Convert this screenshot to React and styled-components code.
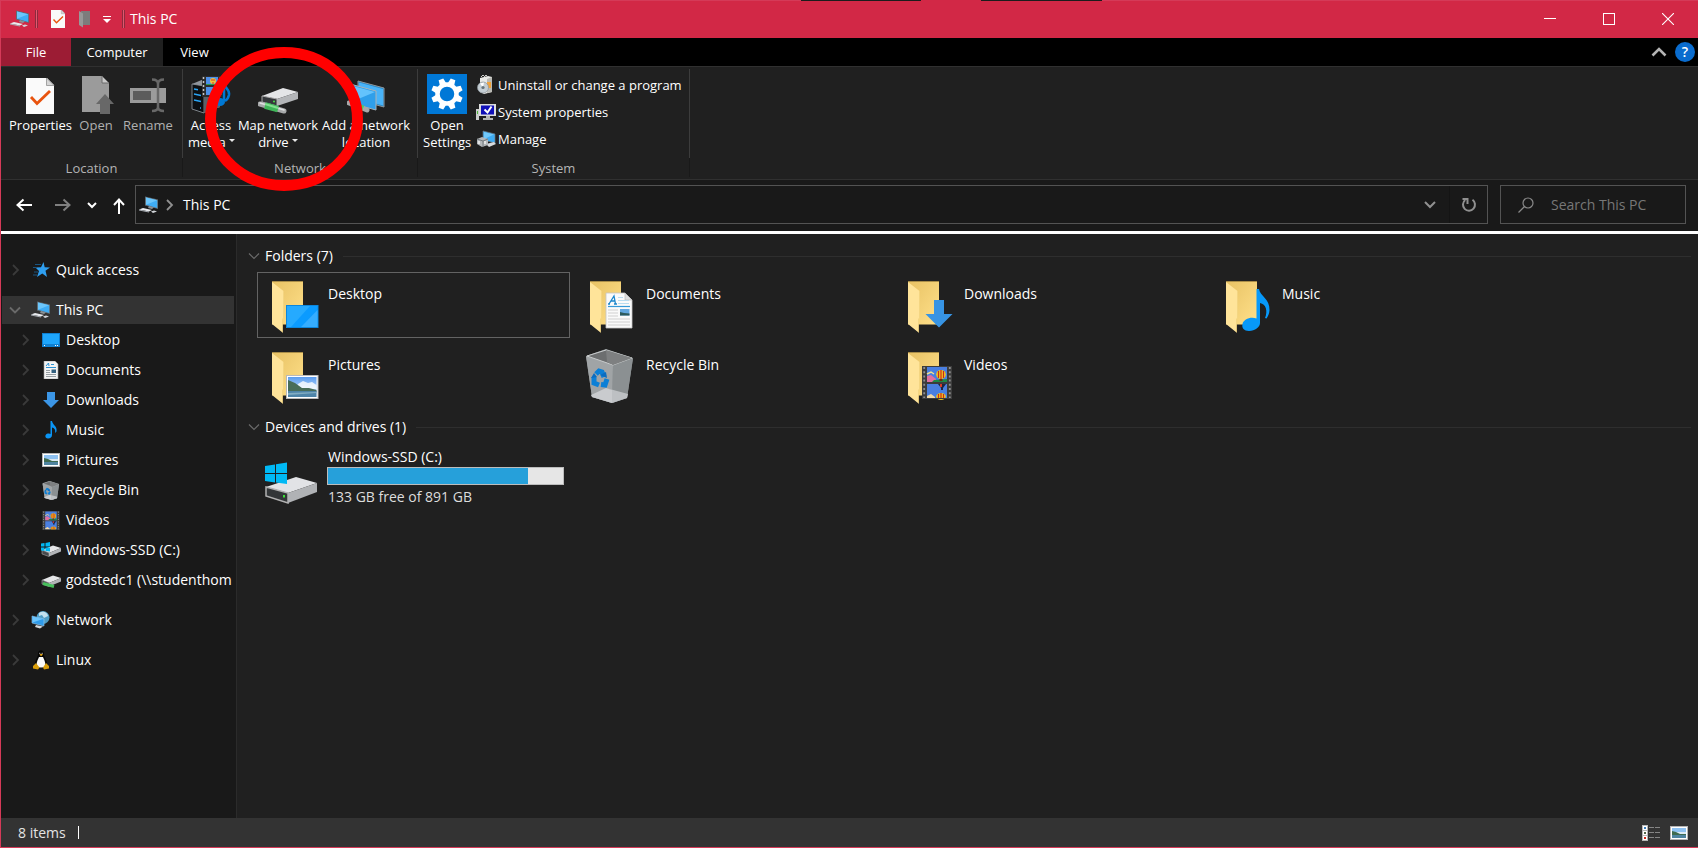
import React, { Component } from 'react';
import styled, { createGlobalStyle } from 'styled-components';

const folders = [
    { name: 'Desktop', icon: 'desktop', selected: true },
    { name: 'Documents', icon: 'documents' },
    { name: 'Downloads', icon: 'downloads' },
    { name: 'Music', icon: 'music' },
    { name: 'Pictures', icon: 'pictures' },
    { name: 'Recycle Bin', icon: 'bin' },
    { name: 'Videos', icon: 'videos' },
];

const tree = [
    { name: 'Desktop', icon: <DesktopIcon /> },
    { name: 'Documents', icon: <DocumentIcon /> },
    { name: 'Downloads', icon: <DownArrowIcon /> },
    { name: 'Music', icon: <NoteIcon /> },
    { name: 'Pictures', icon: <PictureIcon /> },
    { name: 'Recycle Bin', icon: <SmallBinIcon /> },
    { name: 'Videos', icon: <FilmIcon /> },
    { name: 'Windows-SSD (C:)', icon: <SmallDriveIcon windows /> },
    { name: 'godstedc1 (\\\\studenthom', icon: <SmallDriveIcon /> },
];

export default class App extends Component {
    render() {
        return (
            <Window>
                <GlobalStyle />
                <TitleBar />
                <Tabs />
                <Ribbon />
                <AddressRow />
                <Body>
                    <Sidebar />
                    <FileList />
                </Body>
                <StatusBar />
                <Highlight width="158" height="144" viewBox="0 0 158 144" aria-hidden="true">
                    <ellipse cx="79" cy="72" rx="73.5" ry="66.5" fill="none" stroke="#ff0000" strokeWidth="11" />
                </Highlight>
            </Window>
        )
    }
}

function TitleBar() {
    return (
        <TitleContainer>
            <QuickTools>
                <PcIcon />
                <TitleDivider />
                <ToolButton aria-label="Properties"><CheckDocIcon size={18} /></ToolButton>
                <ToolButton aria-label="New folder">
                    <svg width="14" height="18" viewBox="0 0 14 18">
                        <path d="M3 1H12V15H3Z" fill="#7c7c7c" />
                        <path d="M1 1L5 3.500V17.500L1 15Z" fill="#989898" />
                    </svg>
                </ToolButton>
                <ToolButton aria-label="Customize Quick Access Toolbar">
                    <svg width="8" height="8" viewBox="0 0 8 8">
                        <path d="M0 1.500H8" stroke="#fff" />
                        <path d="M0 4H8L4 8Z" fill="#fff" />
                    </svg>
                </ToolButton>
                <TitleDivider />
            </QuickTools>
            <Title>This PC</Title>
            <WindowButton aria-label="Minimize">
                <svg width="12" height="12" viewBox="0 0 12 12"><path d="M0 5.500H12" stroke="#fff" /></svg>
            </WindowButton>
            <WindowButton aria-label="Maximize">
                <svg width="12" height="12" viewBox="0 0 12 12"><rect x=".5" y=".5" width="11" height="11" fill="none" stroke="#fff" /></svg>
            </WindowButton>
            <WindowButton aria-label="Close">
                <svg width="12" height="12" viewBox="0 0 12 12"><path d="M0 0L12 12M12 0L0 12" stroke="#fff" strokeWidth="1.100" /></svg>
            </WindowButton>
        </TitleContainer>
    )
}

function Tabs() {
    return (
        <TabRow>
            <Tab kind="file">File</Tab>
            <Tab kind="active">Computer</Tab>
            <Tab kind="plain">View</Tab>
            <TabTools>
                <ToolButton aria-label="Minimize the Ribbon">
                    <svg width="16" height="10" viewBox="0 0 16 10"><path d="M1.500 8.500L8 2L14.500 8.500" fill="none" stroke="#b4b4b4" strokeWidth="2.600" /></svg>
                </ToolButton>
                <HelpButton aria-label="Help">?</HelpButton>
            </TabTools>
        </TabRow>
    )
}

function Ribbon() {
    return (
        <RibbonContainer>
            <RibbonGroup width={182}>
                <GroupTools inset={8}>
                    <BigButton width={62}>
                        <BigIcon><CheckDocIcon size={36} /></BigIcon>
                        Properties
                    </BigButton>
                    <BigButton width={50} disabled>
                        <BigIcon>
                            <svg width="36" height="38" viewBox="0 0 36 38">
                                <path d="M4 0H24L31 7V36H4Z" fill="#9b9b9b" />
                                <path d="M24 0V7H31Z" fill="#c9c9c9" stroke="#6c6c6c" />
                                <path d="M27 18L36 28H32V38H22V28H18Z" fill="#686868" />
                            </svg>
                        </BigIcon>
                        Open
                    </BigButton>
                    <BigButton width={54} disabled>
                        <BigIcon>
                            <svg width="38" height="36" viewBox="0 0 38 36">
                                <rect x="1" y="10" width="36" height="15" fill="#9b9b9b" />
                                <rect x="4" y="13" width="18" height="9" fill="#5c5c5c" />
                                <path d="M29 3V31M23 1.500C27 1.500 29 3 29 6C29 3 31 1.500 35 1.500M23 33C27 33 29 32 29 29C29 32 31 33 35 33" fill="none" stroke="#686868" strokeWidth="2.500" />
                            </svg>
                        </BigIcon>
                        Rename
                    </BigButton>
                </GroupTools>
                <GroupName>Location</GroupName>
            </RibbonGroup>
            <RibbonGroup width={235}>
                <GroupTools inset={5}>
                    <BigButton width={46}>
                        <BigIcon><MediaIcon /></BigIcon>
                        Access<br />media <DropMark />
                    </BigButton>
                    <BigButton width={88}>
                        <BigIcon><NetworkDriveIcon /></BigIcon>
                        Map network<br />drive <DropMark />
                    </BigButton>
                    <BigButton width={88}>
                        <BigIcon><NetworkPlaceIcon /></BigIcon>
                        Add a network<br />location
                    </BigButton>
                </GroupTools>
                <GroupName>Network</GroupName>
            </RibbonGroup>
            <RibbonGroup width={272}>
                <GroupTools inset={5}>
                    <BigButton width={48}>
                        <BigIcon><SettingsIcon /></BigIcon>
                        Open<br />Settings
                    </BigButton>
                    <SmallTools>
                        <SmallButton><UninstallIcon />Uninstall or change a program</SmallButton>
                        <SmallButton><SystemIcon />System properties</SmallButton>
                        <SmallButton><ManageIcon />Manage</SmallButton>
                    </SmallTools>
                </GroupTools>
                <GroupName>System</GroupName>
            </RibbonGroup>
        </RibbonContainer>
    )
}

function AddressRow() {
    return (
        <AddressContainer>
            <NavButtons>
                <ToolButton aria-label="Back">
                    <svg width="16" height="14" viewBox="0 0 16 14"><path d="M7.500 1.500L1.500 7L7.500 12.500M1.500 7H16" fill="none" stroke="#fff" strokeWidth="2" /></svg>
                </ToolButton>
                <ToolButton aria-label="Forward">
                    <svg width="16" height="14" viewBox="0 0 16 14"><path d="M8.500 1.500L14.500 7L8.500 12.500M14.500 7H0" fill="none" stroke="#808080" strokeWidth="2" /></svg>
                </ToolButton>
                <ToolButton aria-label="Recent locations">
                    <svg width="10" height="8" viewBox="0 0 10 8"><path d="M1 2L5 6L9 2" fill="none" stroke="#fff" strokeWidth="2" /></svg>
                </ToolButton>
                <ToolButton aria-label="Up">
                    <svg width="12" height="18" viewBox="0 0 12 18"><path d="M1 9L6 3.500L11 9M6 4V18" fill="none" stroke="#fff" strokeWidth="2" /></svg>
                </ToolButton>
            </NavButtons>
            <AddressBox>
                <PcIcon />
                <Chevron color="#909090" />
                <Path>This PC</Path>
                <AddressButton aria-label="Previous locations">
                    <svg width="12" height="8" viewBox="0 0 12 8"><path d="M1 1L6 6L11 1" fill="none" stroke="#909090" strokeWidth="2" /></svg>
                </AddressButton>
                <AddressButton aria-label="Refresh" divided>
                    <svg width="16" height="16" viewBox="0 0 16 16">
                        <path d="M11.500 2.800A6 6 0 1 1 4.200 3" fill="none" stroke="#909090" strokeWidth="2" />
                        <path d="M1.500 2H6.500V7" fill="none" stroke="#909090" strokeWidth="2" />
                    </svg>
                </AddressButton>
            </AddressBox>
            <SearchBox>
                <svg width="16" height="16" viewBox="0 0 16 16">
                    <circle cx="10" cy="6" r="5" fill="none" stroke="#8a8a8a" strokeWidth="1.200" />
                    <path d="M6.500 9.500L.5 15.500" stroke="#8a8a8a" strokeWidth="1.200" />
                </svg>
                <SearchInput aria-label="Search This PC" placeholder="Search This PC" />
            </SearchBox>
        </AddressContainer>
    )
}

function Sidebar() {
    return (
        <SidebarContainer>
            <TreeRow><Chevron color="#3a3a3a" /><TreeIcon><StarIcon /></TreeIcon>Quick access</TreeRow>
            <TreeGroup>
                <TreeRow current><Chevron color="#6a6a6a" down /><TreeIcon><PcIcon /></TreeIcon>This PC</TreeRow>
                {tree.map((item, i) =>
                    <TreeRow nested key={i}>
                        <Chevron color="#3a3a3a" />
                        <TreeIcon>{item.icon}</TreeIcon>
                        {item.name}
                    </TreeRow>
                )}
            </TreeGroup>
            <TreeRow><Chevron color="#3a3a3a" /><TreeIcon><NetworkIcon /></TreeIcon>Network</TreeRow>
            <TreeRow><Chevron color="#3a3a3a" /><TreeIcon><LinuxIcon /></TreeIcon>Linux</TreeRow>
        </SidebarContainer>
    )
}

function FileList() {
    return (
        <Main>
            <SectionHeader>
                <SectionChevron />
                <SectionTitle>Folders (7)</SectionTitle>
            </SectionHeader>
            <Tiles>
                {folders.map((folder, i) =>
                    <Tile selected={folder.selected} key={i}>
                        <TileIcon>{folder.icon === 'bin' ? <BinIcon /> : <FolderIcon kind={folder.icon} />}</TileIcon>
                        <TileName>{folder.name}</TileName>
                    </Tile>
                )}
            </Tiles>
            <SectionHeader>
                <SectionChevron />
                <SectionTitle>Devices and drives (1)</SectionTitle>
            </SectionHeader>
            <Tiles>
                <Tile>
                    <TileIcon><DriveIcon /></TileIcon>
                    <DriveInfo>
                        <span>Windows-SSD (C:)</span>
                        <Usage><UsageFill style={{ width: `${(891 - 133) / 891 * 100}%` }} /></Usage>
                        <Free>133 GB free of 891 GB</Free>
                    </DriveInfo>
                </Tile>
            </Tiles>
        </Main>
    )
}

function StatusBar() {
    return (
        <StatusContainer>
            <Count>8 items</Count>
            <ViewButtons>
                <ToolButton aria-label="Details view">
                    <svg width="18" height="16" viewBox="0 0 18 16">
                        <path d="M0 0H6V16H0Z" fill="#b8b8b8" />
                        <path d="M1 1H5V5H1ZM1 6H5V10H1ZM1 11H5V15H1Z" fill="#fff" />
                        <path d="M2 2H4V4H2Z" fill="#3a7fc0" />
                        <path d="M2 7H4V9H2Z" fill="#55664a" />
                        <path d="M2 12H4V14H2Z" fill="#d02a1a" />
                        <path d="M7 2.500H12M13 2.500H18M7 7.500H12M13 7.500H18M7 12.500H12M13 12.500H18" stroke="#858585" />
                    </svg>
                </ToolButton>
                <ToolButton aria-label="Large icons view"><PictureIcon /></ToolButton>
            </ViewButtons>
        </StatusContainer>
    )
}

function Chevron({ color, down }) {
    return (
        <svg width="12" height="12" viewBox="0 0 12 12">
            <path d={down ? 'M1 3.500L6 8.500L11 3.500' : 'M4 1L9 6L4 11'} fill="none" stroke={color} strokeWidth="1.800" />
        </svg>
    )
}

function SectionChevron() {
    return (
        <svg width="12" height="12" viewBox="0 0 12 12">
            <path d="M1 3.500L6 8.500L11 3.500" fill="none" stroke="#6a6a6a" strokeWidth="1.200" />
        </svg>
    )
}

function DropMark() {
    return <svg width="6" height="8" viewBox="0 0 6 8"><path d="M0 0H6L3 3Z" fill="#e8e8e8" /></svg>
}

function PcIcon() {
    return (
        <svg width="20" height="18" viewBox="0 0 20 18">
            <path d="M6 .5L19 3.500V13L6 9.500Z" fill="#5f6b73" />
            <path d="M7 1.500L18.200 4.200V12L7 8.800Z" fill="#3fadf5" />
            <path d="M7 1.500L18.200 4.200L7 8.800Z" fill="#6cc6fb" />
            <path d="M10 10L15 11.500L13 13L9 12Z" fill="#8b9196" />
            <path d="M0 13.500L4 12L13 14L10 15.500Z" fill="#e8eaed" />
            <path d="M0 13.500L10 15.500V16.500L0 14.500Z" fill="#a8adb3" />
            <path d="M12 15.500L15 14.500L18 15.500L14 17Z" fill="#d3d6da" />
        </svg>
    )
}

function CheckDocIcon({ size }) {
    return (
        <svg width={size} height={size} viewBox="0 0 36 36">
            <path d="M4 0H25L32 7V36H4Z" fill="#fafafa" />
            <path d="M24.500 0L32 7.500H24.500Z" fill="#d6d6d6" stroke="#8f8f8f" strokeWidth=".8" />
            <path d="M9 19L15 25.500L28 13" fill="none" stroke="#e8530e" strokeWidth="2.800" />
        </svg>
    )
}

function MediaIcon() {
    return (
        <svg width="40" height="38" viewBox="0 0 40 38">
            <path d="M1 8L13 3L29 6V31L13 37L1 33Z" fill="#8f959c" />
            <path d="M1 8L13 10V37L1 33Z" fill="#0c0f12" stroke="#8f959c" strokeWidth=".8" />
            <path d="M3 13L7 13.800M3 18L10 19.500M3 24L10 25.500M9 32H10" stroke="#2aa4f4" strokeWidth="1.400" />
            <path d="M13 10L29 6V31L13 37Z" fill="#5b6168" />
            <rect x="11" y="0" width="20" height="21" fill="#2c2c2c" />
            <path d="M12.500 1V20M29.500 1V20" stroke="#c4c4c4" strokeWidth="1.500" strokeDasharray="2 2" />
            <path d="M15 1H27V9H15ZM15 11H27V19H15Z" fill="#4d8fe8" />
            <circle cx="22" cy="5" r="3" fill="#f0c23c" />
            <path d="M20 4H24M22 6V9" stroke="#d3362a" />
            <path d="M15 8H27V9H15Z" fill="#2e9c4b" />
            <path d="M33 7V25M33 8C35 13 39 14 38 19C37 23 36 24 34 25" fill="none" stroke="#0078d4" strokeWidth="2.500" />
            <ellipse cx="29" cy="26" rx="5" ry="4" fill="#0078d4" />
        </svg>
    )
}

function NetworkDriveIcon() {
    return (
        <svg width="40" height="26" viewBox="0 0 40 26">
            <path d="M4 8L25 0L40 4L19 11Z" fill="#e4e5e7" />
            <path d="M4 8L19 11V18L4 14Z" fill="#35383b" stroke="#a8a8a8" />
            <path d="M19 11L40 4V11L19 18Z" fill="#b3b5b8" />
            <circle cx="16" cy="13.500" r="1" fill="#4ae048" />
            <path d="M2 16L26 23" stroke="#a7a9aa" strokeWidth="5" strokeLinecap="round" />
            <path d="M2 15L26 22" stroke="#dedfe0" strokeWidth="1.500" strokeLinecap="round" />
            <path d="M7 17.500L20 21.200" stroke="#3fb558" strokeWidth="6.500" />
            <path d="M7 16L20 20" stroke="#82e08f" strokeWidth="2" />
        </svg>
    )
}

function NetworkPlaceIcon() {
    return (
        <svg width="38" height="34" viewBox="0 0 38 34">
            <path d="M11 1L37 8V27L11 20Z" fill="#2485c4" stroke="#8d979d" />
            <path d="M12 2.500L36 9V25.500L12 19Z" fill="#49b3f8" />
            <path d="M3 4L29 11V30L3 23Z" fill="#2f9fea" stroke="#aab3b8" />
            <path d="M4 5.500L28 12L4 22Z" fill="#64c3fc" />
            <path d="M2 23L20 30" stroke="#a7a9aa" strokeWidth="5" strokeLinecap="round" />
            <path d="M6 24.500L16 28.500" stroke="#4fca61" strokeWidth="6" />
        </svg>
    )
}

function SettingsIcon() {
    return (
        <svg width="40" height="40" viewBox="0 0 40 40">
            <rect width="40" height="40" fill="#0078d7" />
            <g transform="translate(20 20)" fill="#fff">
                {[22.5, 67.5, 112.5, 157.5, 202.5, 247.5, 292.5, 337.5].map(a =>
                    <path key={a} d="M-3.600 -9L-2.500 -15.800H2.500L3.600 -9Z" transform={`rotate(${a})`} />
                )}
                <circle r="9.500" fill="none" stroke="#fff" strokeWidth="4.500" />
            </g>
        </svg>
    )
}

function UninstallIcon() {
    return (
        <svg width="20" height="20" viewBox="0 0 20 20">
            <path d="M4 3L12 1L16 2V17L8 19L4 17Z" fill="#e9e9e6" />
            <path d="M11 4L16 2V17L11 18Z" fill="#b9bab5" />
            <path d="M5 2L7 0L9 2M8 2L10 0L12 2" fill="none" stroke="#c9cac6" />
            <rect x="11" y="7" width="4" height="6" fill="#f0a23c" />
            <circle cx="7" cy="12.500" r="5.500" fill="#c4ced4" stroke="#899298" strokeWidth=".7" />
            <path d="M7 12.500L4 8.500L8 7.500Z" fill="#fff" />
            <circle cx="7" cy="12.500" r="1.600" fill="#65737b" />
        </svg>
    )
}

function SystemIcon() {
    return (
        <svg width="20" height="18" viewBox="0 0 20 18">
            <path d="M0 6H3V17H0Z" fill="#c9ccca" />
            <path d="M1 8H2V11H1Z" fill="#4db83b" />
            <path d="M3 1H20V13H3Z" fill="#dcdedc" />
            <path d="M5 2.500H18V11.500H5Z" fill="#1010b8" />
            <path d="M8.500 6.500L11.500 9.500L15.500 3.500" fill="none" stroke="#fff" strokeWidth="2" />
            <path d="M10 13H14V15H17V17H7V15H10Z" fill="#b4b6b4" />
        </svg>
    )
}

function ManageIcon() {
    return (
        <svg width="20" height="18" viewBox="0 0 20 18">
            <path d="M7 1L19 4V13L7 10Z" fill="#3fadf5" stroke="#6b777e" strokeWidth=".7" />
            <path d="M8 2L18 4.500L8 9Z" fill="#71c9fb" />
            <path d="M10 14L18 12L20 14L13 17Z" fill="#d7dade" />
            <path d="M1 9L6 7L12 9V15L6 17L1 14Z" fill="#b4b8bb" />
            <path d="M1 9L7 11L12 9M7 11V17" fill="none" stroke="#747a7e" />
            <path d="M3 11V14M9 11V14" stroke="#f1f1f1" strokeWidth="1.500" />
        </svg>
    )
}

function StarIcon() {
    return (
        <svg width="20" height="18" viewBox="0 0 20 18">
            <path d="M12.500 1L13.700 6.200L19 6.500L14.500 9.800L16 16L11.300 12.500L6 16L8 10L4.500 6.500L10 6.300Z" fill="#2f9ff0" />
            <path d="M4 3.500H10M2 6.500H6M3 11H7M2 14H6" stroke="#1a5480" />
        </svg>
    )
}

function DesktopIcon() {
    return (
        <svg width="18" height="14" viewBox="0 0 18 14">
            <rect width="18" height="14" fill="#0f7fd0" />
            <rect x="1" y="1" width="16" height="10" fill="#1ea5fb" />
            <path d="M2 12.500H3M13 12.500H14M15 12.500H16" stroke="#fff" />
        </svg>
    )
}

function DocumentIcon() {
    return (
        <svg width="18" height="18" viewBox="0 0 18 18">
            <path d="M2 0H13L16 3V18H2Z" fill="#f4f4f4" stroke="#9a9a9a" strokeWidth=".6" />
            <path d="M4 5L6.500 2L7 5M4 6.500H14M9 3.500H12" fill="none" stroke="#2c92d4" />
            <path d="M4 9.500H8M4 11.500H8M4 13.500H14M4 15.500H14" stroke="#8c9499" strokeWidth=".9" />
            <rect x="9.500" y="8.500" width="4.500" height="3.500" fill="#33607f" />
        </svg>
    )
}

function DownArrowIcon() {
    return <svg width="18" height="18" viewBox="0 0 18 18"><path d="M5 1H13V9H17L9 17L1 9H5Z" fill="#3b96e6" /></svg>
}

function NoteIcon() {
    return (
        <svg width="18" height="18" viewBox="0 0 18 18">
            <path d="M8.500 0H10C10.500 4 15.500 5 14.500 10.500L13 12C14 8.500 12 7 10 6.500V14C10 16 8.500 17.500 6 17.500C2.500 17.500 2.500 13 6 12.500C7 12.300 8 12.500 8.500 13Z" fill="#0a95f5" />
        </svg>
    )
}

function PictureIcon() {
    return (
        <svg width="18" height="14" viewBox="0 0 18 14">
            <rect width="18" height="14" fill="#b5b5b5" />
            <rect x="1" y="1" width="16" height="12" fill="#fff" />
            <rect x="2" y="2" width="14" height="10" fill="#8fc2f2" />
            <path d="M2 6H16V8H2Z" fill="#dbeaf4" />
            <path d="M2 5L6 6L10 8H16V9.500H2Z" fill="#3f6b50" />
            <path d="M2 9H16V12H2Z" fill="#4f84a0" />
        </svg>
    )
}

function SmallBinIcon() {
    return (
        <svg width="18" height="19" viewBox="0 0 48 54">
            <BinShape />
        </svg>
    )
}

function FilmIcon() {
    return <svg width="18" height="19" viewBox="0 0 30 33"><FilmShape /></svg>
}

function SmallDriveIcon({ windows }) {
    return (
        <svg width="20" height="16" viewBox="0 0 20 16">
            <path d="M1 8L12 3.500L20 6L8 11Z" fill="#e6e7e9" />
            <path d="M1 8L8 11V14.500L1 12Z" fill="#47494c" stroke="#a4a4a4" strokeWidth=".6" />
            <path d="M8 11L20 6V9.500L8 14.500Z" fill="#b2b4b7" />
            {windows
                ? <path d="M0 1.500L3.500 1V4.500H0ZM4.500 1L9 0V4.500H4.500ZM0 5.500H3.500V9L0 8.500ZM4.500 5.500H9V9.500L4.500 9Z" fill="#00b8f4" />
                : <path d="M2 11.500L13 14.500" stroke="#48c05c" strokeWidth="3" />}
        </svg>
    )
}

function NetworkIcon() {
    return (
        <svg width="20" height="18" viewBox="0 0 20 18">
            <circle cx="12" cy="6.500" r="6.500" fill="#4f9dc4" />
            <path d="M8 2C12 -1 17 2 17 5L13 7L11 4L8 5Z" fill="#c3e1ef" />
            <path d="M1 5L13 8V15L1 12Z" fill="#2f9bea" stroke="#9dccec" strokeWidth=".6" />
            <path d="M1.500 5.500L12 8L1.500 11.500Z" fill="#6cc4fb" />
            <path d="M5 14L12 15.500L9 17.500L4 16Z" fill="#d3d7da" />
        </svg>
    )
}

function LinuxIcon() {
    return (
        <svg width="18" height="20" viewBox="0 0 18 20">
            <path d="M6 4C6 -1 12 -1 12 4C12 8 16 11 15 16L13 18H5L3 16C2 11 6 8 6 4Z" fill="#050505" />
            <path d="M7 7H11C12 10 14 12 13 16C12 18 6 18 5 16C4 12 6 10 7 7Z" fill="#fafafa" />
            <path d="M7.500 4.500L9 3.800L11 4.500L9 6.200Z" fill="#e6a817" />
            <path d="M1 16L4 13L7.500 17.500L6 19.500L1 18.500ZM17 16L14 13L11 17.500L12 19.500L17 18.500Z" fill="#d99e0b" />
            <path d="M7.300 3.300H8.300M9.700 3.300H10.700" stroke="#ddd" />
        </svg>
    )
}

function BinShape() {
    return (
        <g>
            <path d="M0 7L20 0L47 9L41 49L26 54L6 48Z" fill="#8f9496" />
            <path d="M0 7L27 16L26 54L6 48Z" fill="#a0a4a6" />
            <path d="M27 16L47 9L41 49L26 54Z" fill="#8b9092" />
            <path d="M1 7L20 1L46 9L27 16Z" fill="#6c6e6f" stroke="#c9cccd" />
            <path d="M20 1L21 13L27 16L46 9Z" fill="#7e8081" />
            <path d="M5 46L20 39L26 41V54L6 48Z" fill="#c9cbce" />
            <path d="M20 39L42 45L41 49L26 54V41Z" fill="#bdc0c3" />
            <g fill="none" stroke="#0b7fd6" strokeWidth="5">
                <path d="M10 25L13 22L16 23L18 28" />
                <path d="M8 28L8 34L13 36" />
                <path d="M15 35.500L19 36L21 30" />
            </g>
            <path d="M14 26L21 29L20 23ZM5 29L11 28L8 24Z" fill="#0b6cc0" />
        </g>
    )
}

function BinIcon() {
    return <svg width="48" height="54" viewBox="0 0 48 54"><BinShape /></svg>
}

function FilmShape() {
    return (
        <g>
            <rect width="30" height="33" fill="#3c3c3c" />
            <path d="M2.200 1V33M27.800 1V33" stroke="#8f8f8f" strokeWidth="1.800" strokeDasharray="2 2.200" />
            <path d="M5 1H25V16H5ZM5 18H25V32H5Z" fill="#4a7fe0" />
            <path d="M5 10L9 9L14 13L14 16H5Z" fill="#e070a0" />
            <path d="M5 8L9 6L12 8" fill="none" stroke="#f4e08c" strokeWidth="1.500" />
            <path d="M12 14L25 13V16H10Z" fill="#1c8848" />
            <ellipse cx="19" cy="8.500" rx="4.800" ry="4.500" fill="#f2c81e" />
            <path d="M16.500 5V12M19 4V13M21.500 5V12" stroke="#cc2a1c" strokeWidth="1.200" />
            <path d="M17.500 13H20.500V15H17.500Z" fill="#6a2a12" />
            <path d="M16 18H24L21 22V24H19V22Z" fill="#1c2440" />
            <path d="M18 18H20V21H18Z" fill="#d73a25" />
            <ellipse cx="19" cy="30.500" rx="4.800" ry="3.500" fill="#f2c81e" />
            <path d="M16.500 28V32M19 27V32M21.500 28V32" stroke="#cc2a1c" strokeWidth="1.200" />
            <path d="M5 30L9 28L13 31V32H5Z" fill="#f0d9a8" />
            <rect y="32" width="30" height="1" fill="#3c3c3c" />
        </g>
    )
}

// the badge is drawn over the lower right part of the folder
function FolderIcon({ kind }) {
    return (
        <svg width="54" height="56" viewBox="-6 -4 54 56">
            <defs>
                <linearGradient id={`back-${kind}`} x1="0" y1="0" x2="1" y2="1">
                    <stop offset="0" stopColor="#e8c264" />
                    <stop offset="1" stopColor="#ffe08a" />
                </linearGradient>
                <linearGradient id={`sky-${kind}`} x1="0" y1="0" x2="0" y2="1">
                    <stop offset="0" stopColor="#5b9df0" />
                    <stop offset="1" stopColor="#e8f4fc" />
                </linearGradient>
            </defs>
            <path d="M1 .5H32V43.500H1Z" fill={`url(#back-${kind})`} />
            <path d="M1 .5H32" stroke="#a98d49" />
            <path d="M1 1L12.500 10V37L11.500 38V51.500L1 43Z" fill="#ffe49a" />
            <path d="M12.500 10V37L11.500 38V51.500" fill="none" stroke="#f3d480" strokeWidth=".8" />
            {kind === 'desktop' &&
                <g>
                    <rect x="15" y="24" width="32.500" height="23" fill="#0c86dc" />
                    <rect x="16" y="25" width="30.500" height="21" fill="#0b9bff" />
                    <path d="M16 25H39L20 46H16Z" fill="#25aaff" />
                    <path d="M30 46L46.500 29V46Z" fill="#35adff" />
                </g>}
            {kind === 'documents' &&
                <g>
                    <path d="M17 12H36L43 19V47H17Z" fill="#fafafa" stroke="#c4c4c4" strokeWidth=".8" />
                    <path d="M36 12V19H43Z" fill="#dedede" stroke="#b4b4b4" strokeWidth=".6" />
                    <path d="M19 23H21M25 23H28M20 23L25 15L26.500 23M22 20H26" fill="none" stroke="#1c86cc" strokeWidth="1.300" />
                    <path d="M19 25.500H41" stroke="#3599d8" strokeWidth="1.200" />
                    <path d="M29 16.500H34M29 19.500H40M29 22.500H40" stroke="#b9dcf0" />
                    <path d="M19 29H29M19 32H29M19 35H29M19 38H41M19 41H41M19 44H41" stroke="#d0d0d0" />
                    <rect x="31" y="28" width="9.500" height="6.500" fill="#62a8e0" />
                    <path d="M31 31L35 32L40.500 32.500V34.500H31Z" fill="#2c5a5c" />
                </g>}
            {kind === 'downloads' && <path d="M27 19H37V33H45.500L32 46.500L18.500 33H27Z" fill="#3794e4" />}
            {kind === 'music' &&
                <path d="M31.500 8H34C35 15 45 18 44.500 29C44.300 33 43 35 41.500 37.500L40 37C43 30 41 23 35 22V42C35 46 30 50 24 50C19 50 16.500 47 17.500 43C18.500 38.500 25 35.500 31.500 37.500Z" fill="#0799fa" />}
            {kind === 'pictures' &&
                <g>
                    <rect x="15.500" y="23.500" width="31.500" height="23" fill="#fff" stroke="#b9b9b9" />
                    <rect x="17" y="25" width="28.500" height="20" fill={`url(#sky-${kind})`} />
                    <path d="M27 32L32 29L37 31L41 30L45.500 33V37H25Z" fill="#fff" opacity=".8" />
                    <path d="M17 28L24 31L31 36L38 36L45.500 38V40H17Z" fill="#496d58" />
                    <path d="M17 39H45.500V45H17Z" fill="#4e84a8" />
                    <path d="M17 41L45.500 40V41L17 43Z" fill="#81acc2" />
                </g>}
            {kind === 'videos' && <g transform="translate(15 14)"><FilmShape /></g>}
        </svg>
    )
}

function DriveIcon() {
    return (
        <svg width="54" height="56" viewBox="0 -14 54 56">
            <path d="M1 25L31 15L52 21L23 31Z" fill="#e2e3e6" />
            <path d="M1 25L23 31V41L1 34Z" fill="#333638" stroke="#b1b1b1" strokeWidth="1.500" />
            <path d="M23 31L52 21V30L23 41Z" fill="#b0b2b5" />
            <rect x="18" y="33" width="2" height="2.500" fill="#3ee03a" />
            <path d="M0 4L10 2.500V11H0ZM11 2.300L22 .5V11H11ZM0 12H10V20.500L0 19ZM11 12H22V22L11 20.500Z" fill="#00b9f5" />
        </svg>
    )
}

const GlobalStyle = createGlobalStyle`
    body {
        margin: 0;
        background: #202020;
    }

    *, *::before {
        box-sizing: border-box;
    }

    svg {
        flex-shrink: 0;
    }

    button, input {
        font: inherit;
        color: inherit;
        border: 0;
        padding: 0;
        background: none;
    }
`;

const Window = styled.div`
    position: relative;
    display: flex;
    flex-direction: column;
    min-height: 100vh;
    border: 1px solid #d53a58;
    border-width: 0 0 1px 1px;
    font-family: "Open Sans", "Noto Sans", sans-serif;
    font-size: 14px;
    line-height: 20px;
    color: #fff;
    background: #202020;
`;

const Highlight = styled.svg`
    position: absolute;
    left: 204px;
    top: 47px;
    pointer-events: none;
`;

const TitleContainer = styled.header`
    position: relative;
    display: flex;
    height: 38px;
    padding-right: 1px;
    background: #d22846;

    &::before {
        content: "";
        position: absolute;
        inset: 0 0 auto 0;
        height: 1px;
        background: linear-gradient(90deg, #d53a58 800px, #1c1c1c 800px 920px, #d22846 920px 980px, #1c1c1c 980px 1101px, #d53a58 1101px);
    }
`;

const QuickTools = styled.div`
    display: flex;
    align-items: center;
    gap: 11px;
    padding-left: 9px;

    & > svg {
        margin-right: -6px;
    }
`;

const TitleDivider = styled.span`
    width: 3px;
    height: 18px;
    border: 1px solid #8e2a3d;
    border-width: 0 1px;
    background: #e0586f;
`;

const ToolButton = styled.button`
    display: flex;
    align-items: center;
    justify-content: center;
`;

const Title = styled.h1`
    flex: 1;
    margin: 0;
    padding-left: 5px;
    font-size: 14px;
    font-weight: 400;
    line-height: 38px;
`;

const WindowButton = styled.button`
    display: flex;
    align-items: center;
    justify-content: center;
    width: 59px;
`;

const TabRow = styled.nav`
    display: flex;
    height: 28px;
    background: #000;
`;

const Tab = styled.button`
    width: ${props => props.kind === 'file' ? 70 : props.kind === 'active' ? 92 : 63}px;
    font-size: 13px;
    background: ${props => props.kind === 'file' ? '#9c1c34' : props.kind === 'active' ? '#202020' : '#000'};
`;

const TabTools = styled.div`
    display: flex;
    align-items: center;
    gap: 8px;
    margin-left: auto;
    padding-right: 3px;
`;

const HelpButton = styled.button`
    width: 20px;
    height: 20px;
    border-radius: 50%;
    font-size: 14px;
    font-weight: 600;
    background: #0a6cce;
`;

const RibbonContainer = styled.section`
    display: flex;
    height: 114px;
    padding: 2px 0;
    border: 1px solid #303030;
    border-width: 1px 0;
    font-size: 13px;
    line-height: 17px;
`;

const RibbonGroup = styled.div`
    display: flex;
    flex-direction: column;
    width: ${props => props.width}px;
`;

const GroupTools = styled.div`
    display: flex;
    align-items: flex-start;
    height: 89px;
    padding-left: ${props => props.inset}px;
    border-right: 1px solid #3c3c3c;
`;

const BigButton = styled.button`
    flex-shrink: 0;
    width: ${props => props.width}px;
    text-align: center;
    white-space: nowrap;
    color: ${props => props.disabled ? '#b0b0b0' : '#fff'};
`;

const BigIcon = styled.span`
    display: flex;
    align-items: flex-end;
    justify-content: center;
    height: 48px;
    padding-bottom: 3px;
`;

const SmallTools = styled.div`
    display: flex;
    flex-direction: column;
    gap: 7px;
    padding-top: 6px;
    padding-left: 5px;
`;

const SmallButton = styled.button`
    display: flex;
    align-items: center;
    gap: 2px;
    height: 20px;
    white-space: nowrap;
`;

const GroupName = styled.div`
    height: 19px;
    border-right: 1px solid #191919;
    text-align: center;
    line-height: 21px;
    color: #b4b4b4;
`;

const AddressContainer = styled.div`
    display: flex;
    height: 54px;
    padding: 5px 12px 7px 15px;
    border-bottom: 3px solid #fff;
    background: #191919;
`;

const NavButtons = styled.div`
    display: flex;
    align-items: center;
    gap: 16px;
    width: 119px;

    & > :first-child {
        margin-right: 7px;
    }
`;

const AddressBox = styled.div`
    display: flex;
    flex: 1;
    align-items: center;
    gap: 4px;
    height: 39px;
    padding-left: 3px;
    border: 1px solid #535353;
`;

const Path = styled.span`
    flex: 1;
    padding-left: 4px;
`;

const AddressButton = styled.button`
    display: flex;
    align-items: center;
    justify-content: center;
    width: 38px;
    height: 37px;
    margin-left: -4px;
    border-left: ${props => props.divided ? '1px solid #141414' : '0'};
`;

const SearchBox = styled.label`
    display: flex;
    align-items: center;
    gap: 17px;
    width: 186px;
    height: 39px;
    margin-left: 12px;
    padding-left: 17px;
    border: 1px solid #535353;
`;

const SearchInput = styled.input`
    flex: 1;
    min-width: 0;
    outline: none;

    &::placeholder {
        color: #777;
        opacity: 1;
    }
`;

const Body = styled.div`
    display: flex;
    flex: 1;
`;

const SidebarContainer = styled.aside`
    display: flex;
    flex-direction: column;
    gap: 10px;
    flex-shrink: 0;
    width: 236px;
    padding: 21px 2px 0 1px;
    border-right: 1px solid #2b2b2b;
    background: #191919;
`;

const TreeGroup = styled.div`
    display: flex;
    flex-direction: column;
`;

const TreeRow = styled.div`
    display: flex;
    align-items: center;
    height: ${props => props.current ? 28 : 30}px;
    margin: ${props => props.current ? '1px 0' : '0'};
    padding-left: ${props => props.nested ? 17 : 7}px;
    white-space: nowrap;
    background: ${props => props.current ? '#333' : 'none'};
`;

const TreeIcon = styled.span`
    display: flex;
    align-items: center;
    justify-content: center;
    flex-shrink: 0;
    width: 20px;
    margin: 0 5px 0 10px;
`;

const Main = styled.main`
    flex: 1;
    padding: 11px 7px 0 11px;
`;

const SectionHeader = styled.div`
    display: flex;
    align-items: center;
    gap: 5px;
    height: 22px;

    &::after {
        content: "";
        flex: 1;
        height: 1px;
        margin-left: 5px;
        background: #2e2e2e;
    }
`;

const SectionTitle = styled.h2`
    margin: 0;
    font-size: 14px;
    font-weight: 400;
`;

const Tiles = styled.div`
    display: grid;
    grid-template-columns: repeat(auto-fill, 313px);
    gap: 5px;
    padding: 5px 0 7px 9px;
`;

const Tile = styled.div`
    display: flex;
    height: 66px;
    border: 1px solid ${props => props.selected ? '#636363' : 'transparent'};
`;

const TileIcon = styled.span`
    display: flex;
    align-items: center;
    justify-content: center;
    width: 54px;
    margin: 0 9px 0 7px;
`;

const TileName = styled.span`
    padding-top: 11px;
`;

const DriveInfo = styled.div`
    display: flex;
    flex-direction: column;
    width: 237px;
    margin-left: -1px;
    padding-top: 3px;

    span {
        padding-left: 1px;
    }
`;

const Usage = styled.div`
    height: 18px;
    border: 1px solid #bcbcbc;
    background: #e6e6e6;
`;

const UsageFill = styled.div`
    height: 16px;
    background: #26a0da;
`;

const Free = styled.span`
    padding-top: 2px;
    color: #ddd;
`;

const StatusContainer = styled.footer`
    display: flex;
    align-items: center;
    justify-content: space-between;
    height: 29px;
    padding: 0 10px 0 17px;
    background: #333;
`;

const Count = styled.span`
    display: flex;
    align-items: center;
    gap: 12px;
    color: #e4e4e4;

    &::after {
        content: "";
        width: 1px;
        height: 13px;
        background: #fff;
    }
`;

const ViewButtons = styled.div`
    display: flex;
    gap: 10px;
`;
